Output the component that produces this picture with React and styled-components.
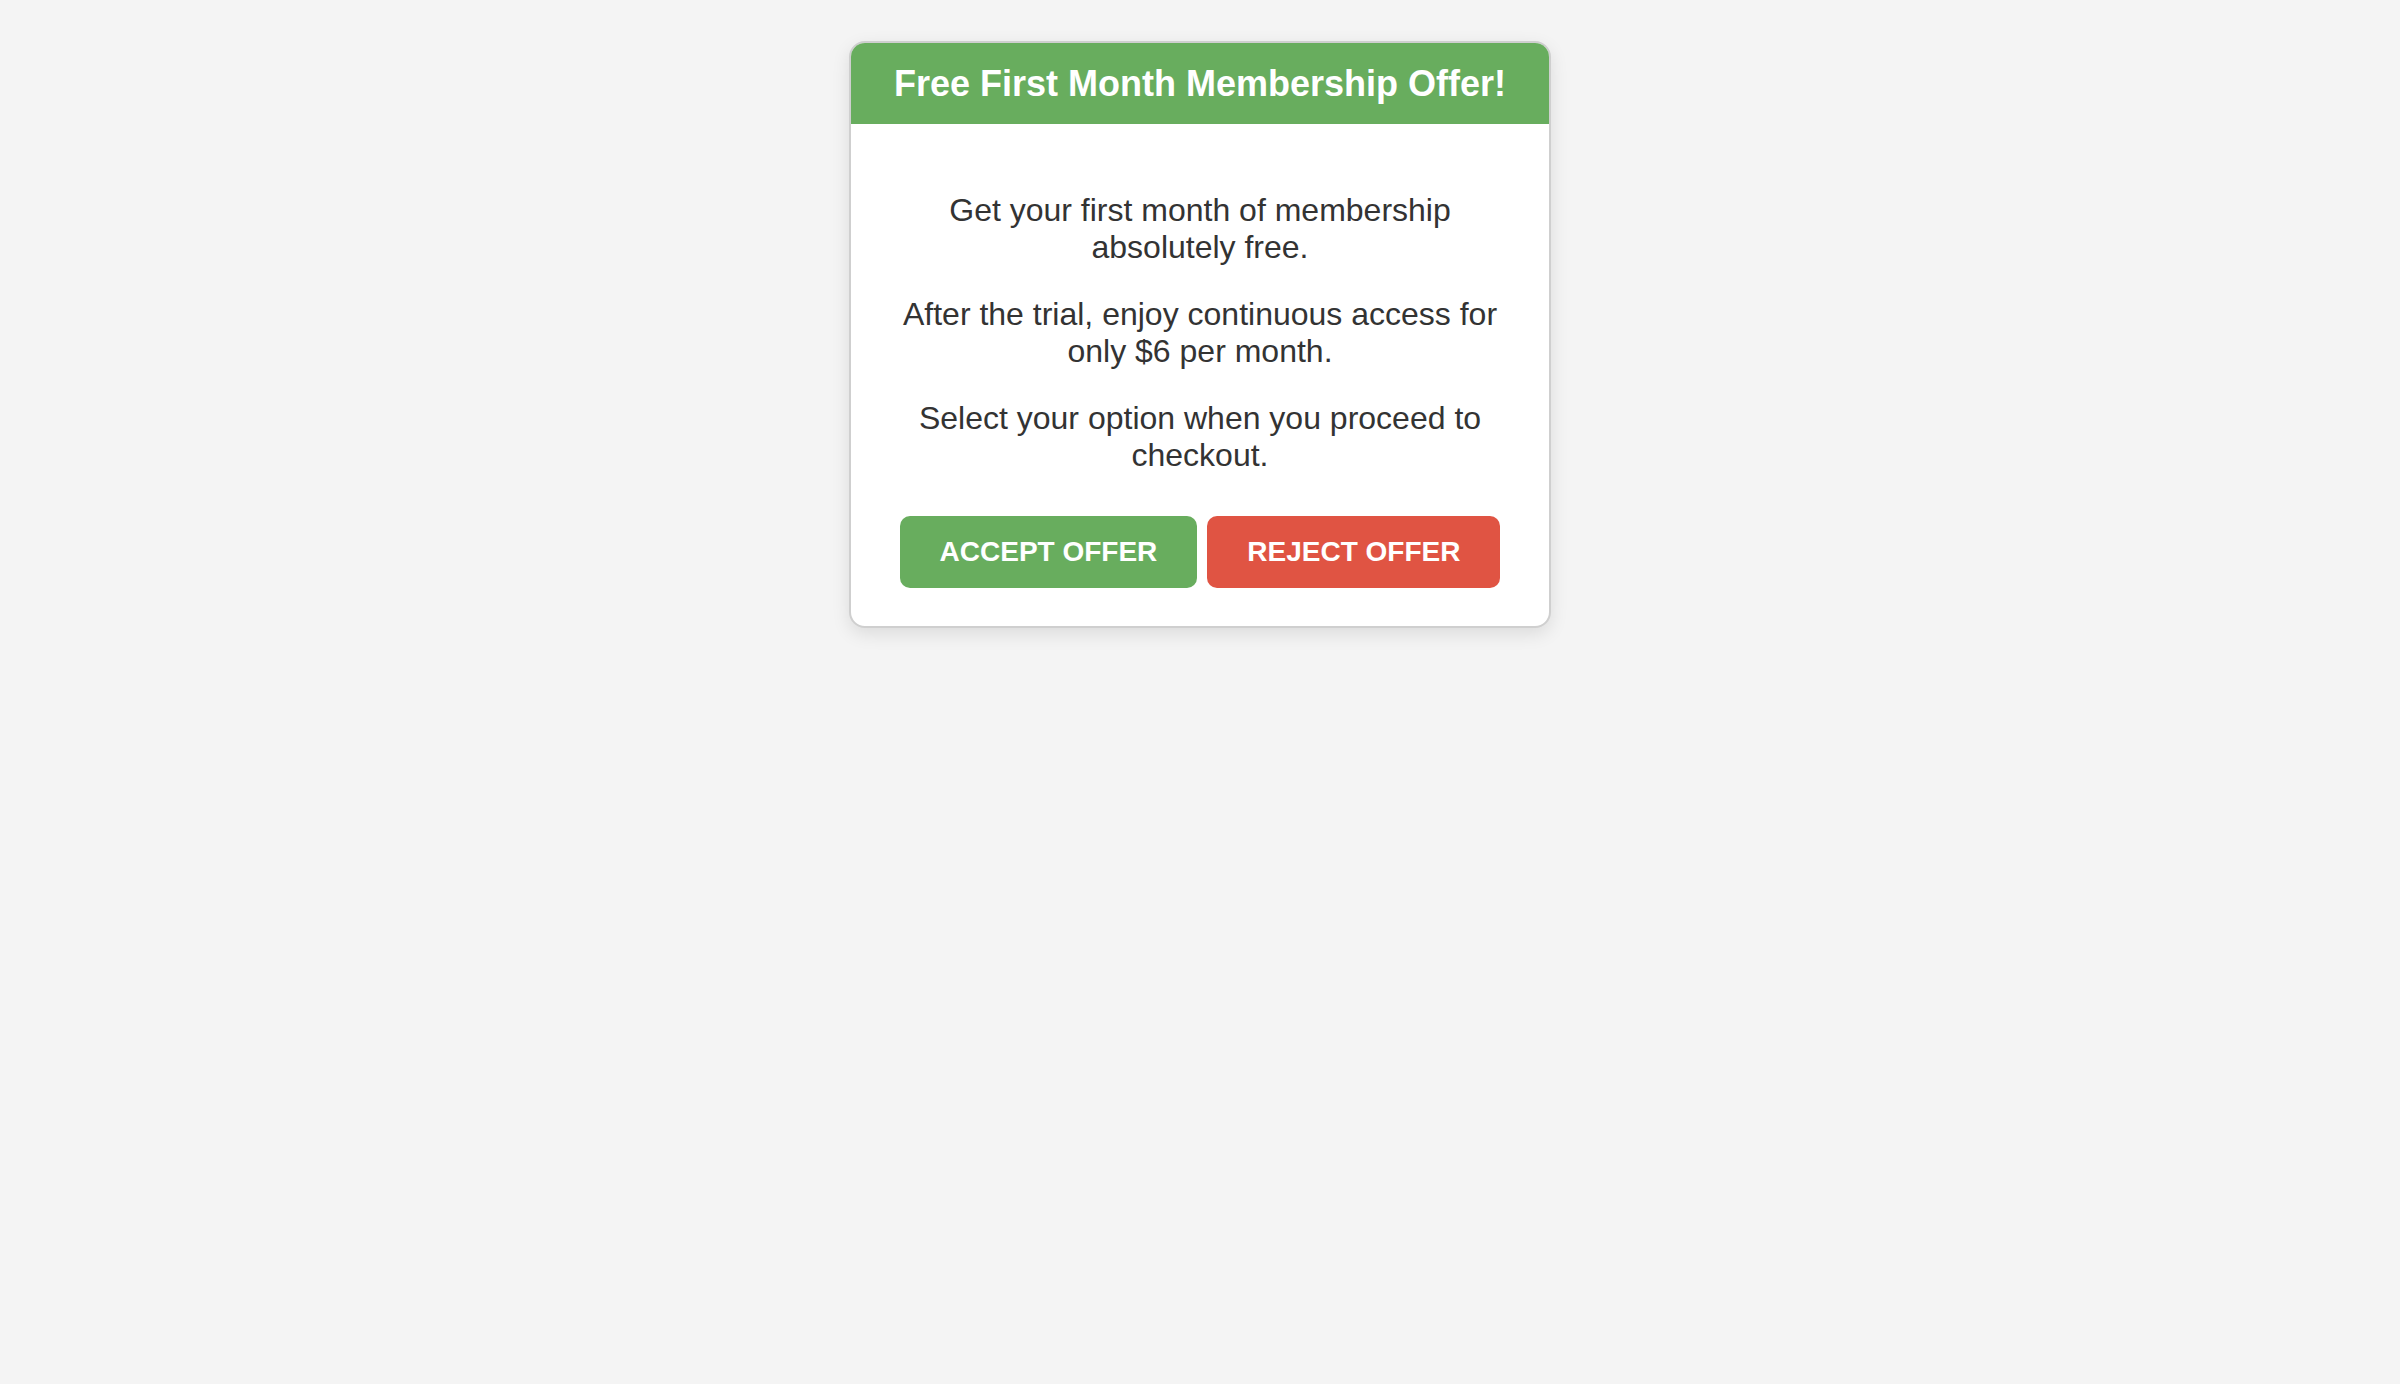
import React from 'react';
import styled, { createGlobalStyle } from 'styled-components';

const GlobalStyle = createGlobalStyle`
  body {
    margin: 0;
    background-color: #f4f4f4;
    font-family: "Liberation Sans", Arial, sans-serif;
    color: #333;
  }
`;

const Page = styled.div`
  display: flex;
  justify-content: center;
  padding-top: 41px;
  min-height: 1343px;
`;

const Card = styled.div`
  width: 698px;
  background-color: #fff;
  border: 2px solid #cfcfcf;
  border-radius: 16px;
  overflow: hidden;
  box-shadow: 0 6px 18px rgba(0, 0, 0, 0.1);
  align-self: flex-start;
`;

const Header = styled.header`
  background-color: #68ad5e;
  color: #fff;
  text-align: center;
  padding: 20px 20px 19px;
`;

const Title = styled.h1`
  margin: 0;
  font-size: 36px;
  font-weight: bold;
  line-height: normal;
`;

const Body = styled.div`
  padding: 68px 49px 38px;
  text-align: center;
`;

const Text = styled.p`
  margin: 0 0 30px;
  font-size: 32px;
  line-height: normal;
  color: #333;

  &:last-of-type {
    margin-bottom: 42px;
  }
`;

const Actions = styled.div`
  display: flex;
  justify-content: center;
  gap: 10px;
`;

const Button = styled.button`
  flex: none;
  border: none;
  border-radius: 10px;
  padding: 20px 40px;
  font-family: "Liberation Sans", Arial, sans-serif;
  font-size: 28px;
  font-weight: bold;
  line-height: normal;
  white-space: nowrap;
  text-transform: uppercase;
  color: #fff;
  background-color: ${({ $variant }) => ($variant === 'reject' ? '#e05443' : '#68ad5e')};
  cursor: pointer;
`;

export default function App() {
  return (
    <>
      <GlobalStyle />
      <Page>
        <Card>
          <Header>
            <Title>Free First Month Membership Offer!</Title>
          </Header>
          <Body>
            <Text>Get your first month of membership absolutely free.</Text>
            <Text>After the trial, enjoy continuous access for only $6 per month.</Text>
            <Text>Select your option when you proceed to checkout.</Text>
            <Actions>
              <Button $variant="accept">Accept Offer</Button>
              <Button $variant="reject">Reject Offer</Button>
            </Actions>
          </Body>
        </Card>
      </Page>
    </>
  );
}
